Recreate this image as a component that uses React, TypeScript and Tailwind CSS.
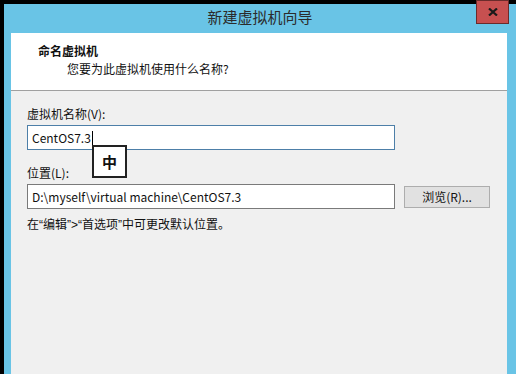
const font = { fontFamily: '"Noto Sans CJK SC", "Noto Sans", sans-serif' }

function Q({ c }: { c: string }) {
  return <span className="font-['Liberation_Sans',sans-serif]">{c}</span>
}

export default function App() {
  return (
    <div
      className="w-[516px] h-[374px] bg-black overflow-hidden flex flex-col pt-[4px] pl-[4px] text-[12px] text-[#111]"
      style={font}
    >
      <div className="relative flex-1 flex flex-col bg-[#69c4e6]">
        {/* title bar */}
        <div className="h-[29px] flex items-center justify-center text-[15px] text-[#2b2b2b] pb-[2px]">
          新建虚拟机向导
        </div>
        <div className="absolute -top-[4px] right-[7px] w-[33px] h-[24px] bg-[#c75050] border border-[#6b2b2b] flex items-center justify-center">
          <svg width="10" height="8" viewBox="0 0 10 8">
            <path d="M1 0.5 L9 7.5 M9 0.5 L1 7.5" stroke="#1a1a1a" strokeWidth="2.2" />
          </svg>
        </div>

        <div className="flex-1 flex flex-col ml-[7px] mr-[9px]">
          {/* header */}
          <div className="h-[58px] bg-white border-b border-[#a0a0a0] pt-[10px] pl-[27px] leading-[16px]">
            <div className="font-bold">命名虚拟机</div>
            <div className="mt-[2px] pl-[29px]">您要为此虚拟机使用什么名称?</div>
          </div>

          {/* body */}
          <div className="flex-1 bg-[#f0f0f0] pt-[15px] pl-[16px] leading-[16px]">
            <div>虚拟机名称(V):</div>
            <div className="relative mt-[3px] w-[368px] h-[25px] bg-white border border-[#4d7fa8] flex items-center pl-[4px]">
              <span>CentOS7.3</span>
              <span className="ml-[1px] w-px h-[14px] bg-black" />
              <div className="absolute left-[64px] top-[19px] w-[35px] h-[33px] bg-white border-2 border-[#222] flex items-center justify-center text-[15px] font-bold">
                中
              </div>
            </div>

            <div className="mt-[15px]">位置(L):</div>
            <div className="mt-[3px] flex items-start gap-[9px]">
              <div className="w-[368px] h-[25px] bg-white border border-[#7a7a7a] flex items-center pl-[4px]">
                D:\myself\virtual machine\CentOS7.3
              </div>
              <div className="mt-[2px] w-[86px] h-[22px] bg-[#e1e1e1] border border-[#adadad] flex items-center justify-center">
                浏览(R)...
              </div>
            </div>

            <div className="mt-[7px]">
              在<Q c="“" />编辑<Q c="”>“" />首选项<Q c="”" />中可更改默认位置。
            </div>
          </div>
        </div>
      </div>
    </div>
  )
}
